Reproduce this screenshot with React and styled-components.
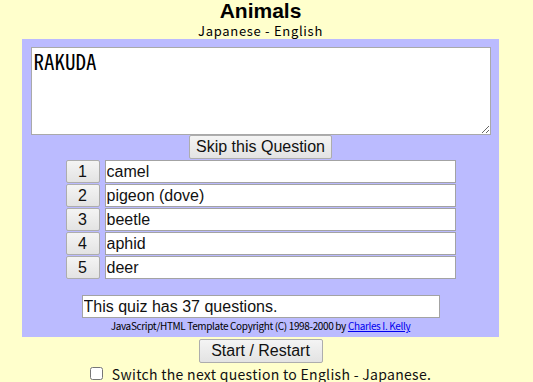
import React, { useState } from "react";
import styled, { createGlobalStyle } from "styled-components";

const GlobalStyle = createGlobalStyle`
  html, body {
    margin: 0;
    padding: 0;
    background: #ffffcc;
    min-height: 100%;
  }
`;

const Page = styled.div`
  width: 521px;
  display: flex;
  flex-direction: column;
  align-items: center;
  font-family: "Liberation Sans", Arial, sans-serif;
  color: #000;
`;

const Title = styled.h1`
  margin: 0;
  font-size: 21px;
  line-height: 22px;
  font-weight: bold;
`;

const Subtitle = styled.div`
  font-family: "Noto Sans CJK JP", sans-serif;
  font-size: 13px;
  line-height: 17px;
  letter-spacing: 0.7px;
`;

const Panel = styled.div`
  width: 477px;
  background: #bbbbff;
  padding: 8px 0 4px;
  display: flex;
  flex-direction: column;
  align-items: center;
`;

const Question = styled.textarea`
  box-sizing: border-box;
  width: 460px;
  height: 88px;
  margin: 0;
  padding: 1px 2px;
  border: 1px solid #a9a9a9;
  background: #fff;
  font-family: "Noto Sans Mono CJK JP", "Liberation Mono", monospace;
  font-weight: 300;
  font-size: 21px;
  line-height: 24px;
  color: #000;
  display: block;
`;

const Button = styled.button`
  box-sizing: border-box;
  width: ${(p) => p.$w}px;
  height: ${(p) => p.$h || 24}px;
  margin: 0;
  padding: 0;
  border: 1px solid #adadad;
  border-radius: 2px;
  background: linear-gradient(#f4f4f4, #e3e3e3);
  font-family: "Liberation Sans", Arial, sans-serif;
  font-size: 16px;
  color: #111;
  cursor: pointer;
`;

const Answers = styled.div`
  display: flex;
  flex-direction: column;
  gap: 1px;
  margin-top: 1px;
`;

const Row = styled.div`
  display: flex;
  gap: 5px;
  height: 23px;
`;

const Field = styled.input`
  box-sizing: border-box;
  width: ${(p) => p.$w}px;
  height: 23px;
  margin: 0;
  padding: 0 1px;
  border: 1px solid #a3a3a3;
  background: #fff;
  font-family: "Liberation Sans", Arial, sans-serif;
  font-size: 16px;
  color: #111;
  outline: none;
`;

const Status = styled(Field)`
  margin-top: 16px;
`;

const Copyright = styled.div`
  font-family: "Noto Sans CJK JP", sans-serif;
  font-size: 10px;
  line-height: 14px;
  letter-spacing: -0.35px;
  margin-top: 1px;
  color: #000;

  a {
    color: #0000ee;
    text-decoration: underline;
  }
`;

const Restart = styled(Button)`
  margin-top: 2px;
`;

const SwitchRow = styled.label`
  display: flex;
  align-items: center;
  gap: 9px;
  margin-top: 2px;
  height: 17px;
  font-family: "Noto Sans CJK JP", sans-serif;
  font-size: 14px;
  letter-spacing: 0.3px;
  color: #111;

  input {
    margin: 0;
    width: 13px;
    height: 13px;
  }
`;

const choices = ["camel", "pigeon (dove)", "beetle", "aphid", "deer"];

const App = () => {
  const [reverse, setReverse] = useState(false);

  return (
    <Page>
      <GlobalStyle />
      <Title>Animals</Title>
      <Subtitle>Japanese - English</Subtitle>

      <Panel>
        <Question defaultValue="RAKUDA" />
        <Button $w={143}>Skip this Question</Button>

        <Answers>
          {choices.map((c, i) => (
            <Row key={c}>
              <Button $w={34} $h={23}>{i + 1}</Button>
              <Field $w={351} defaultValue={c} readOnly />
            </Row>
          ))}
        </Answers>

        <Status $w={358} defaultValue="This quiz has 37 questions." readOnly />
        <Copyright>
          JavaScript/HTML Template Copyright (C) 1998-2000 by <a href="#">Charles I. Kelly</a>
        </Copyright>
      </Panel>

      <Restart $w={124}>Start / Restart</Restart>
      <SwitchRow>
        <input
          type="checkbox"
          checked={reverse}
          onChange={() => setReverse(!reverse)}
        />
        Switch the next question to English - Japanese.
      </SwitchRow>
    </Page>
  );
};

export default App;
